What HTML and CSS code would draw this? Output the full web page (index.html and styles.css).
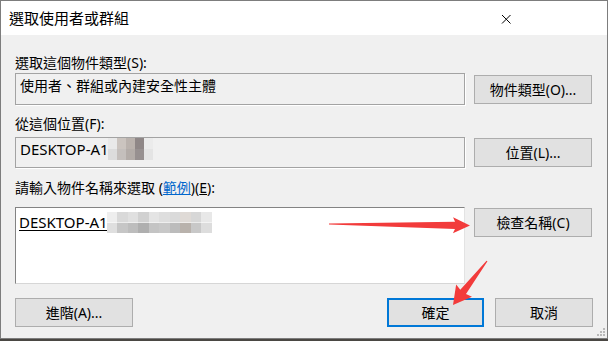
FILE: index.html
```html
<!DOCTYPE html>
<html lang="zh-Hant">
<head>
<meta charset="utf-8">
<title>選取使用者或群組</title>
<link rel="stylesheet" href="styles.css">
</head>
<body>
<div class="window">
  <div class="titlebar">
    <span class="title">選取使用者或群組</span>
    <svg class="close" width="10" height="10" viewBox="0 0 10 10"><path d="M1 1L9.5 9.5M9.5 1L1 9.5" stroke="#000" stroke-width="1" fill="none"/></svg>
  </div>
  <div class="content">
    <div class="label l1">選取這個物件類型(S):</div>
    <div class="row r1">
      <div class="field ro">使用者、群組或內建安全性主體</div>
      <button class="btn">物件類型(O)...</button>
    </div>
    <div class="label l2">從這個位置(F):</div>
    <div class="row r2">
      <div class="field ro short"><span class="host">DESKTOP-A1</span><span class="mosaic small"></span></div>
      <button class="btn">位置(L)...</button>
    </div>
    <div class="label l3">請輸入物件名稱來選取 (<a class="link">範例</a>)(<u>E</u>):</div>
    <div class="row r3">
      <div class="field edit"><span class="host name">DESKTOP-A1</span><span class="mosaic big"></span></div>
      <button class="btn">檢查名稱(C)</button>
    </div>
    <div class="footer">
      <button class="btn adv">進階(A)...</button>
      <div class="actions">
        <button class="btn ok">確定</button>
        <button class="btn cancel">取消</button>
      </div>
    </div>
  </div>
  <svg class="grip" width="10" height="10" viewBox="0 0 10 10">
    <rect x="7" y="1" width="2" height="2" fill="#b9b9b9"/>
    <rect x="4" y="4" width="2" height="2" fill="#b9b9b9"/>
    <rect x="7" y="4" width="2" height="2" fill="#b9b9b9"/>
    <rect x="1" y="7" width="2" height="2" fill="#b9b9b9"/>
    <rect x="4" y="7" width="2" height="2" fill="#b9b9b9"/>
    <rect x="7" y="7" width="2" height="2" fill="#b9b9b9"/>
  </svg>
</div>
<svg class="arrows" width="608" height="341" viewBox="0 0 608 341">
  <g transform="translate(329 224) rotate(0.6)">
    <polygon points="0,-0.6 126,-3.6 124,-8 141,0 124,8 126,3.6 0,0.6" fill="#f23b3b"/>
  </g>
  <g transform="translate(487 261) rotate(127.7)">
    <polygon points="0,-0.6 39,-3.6 37.5,-10 55.6,0 37.5,10 39,3.6 0,0.6" fill="#f23b3b"/>
  </g>
</svg>
</body>
</html>
```

FILE: styles.css
```css
* { box-sizing: border-box; }
html, body { margin: 0; padding: 0; }
body {
  width: 608px;
  height: 341px;
  overflow: hidden;
  position: relative;
  background: #4a4743;
  font-family: "Noto Sans", "Noto Sans CJK TC", sans-serif;
  color: #000;
}
.window {
  position: relative;
  width: 608px;
  height: 339px;
  border: 1px solid #7d7d7d;
  background: #f0f0f0;
  display: flex;
  flex-direction: column;
}
.titlebar {
  height: 34px;
  background: #fff;
  display: flex;
  align-items: center;
  justify-content: space-between;
  padding: 0 96px 0 8px;
}
.title {
  font-size: 15px;
  line-height: 20px;
}
.close { display: block; margin-top: 1px; }
.content {
  padding: 19px 14px 0 14px;
  display: flex;
  flex-direction: column;
}
.label {
  font-size: 14px;
  line-height: 18px;
  height: 18px;
  white-space: nowrap;
}
.l2 { margin-top: 10px; }
.l3 { margin-top: 11px; }
.link { color: #0066cc; text-decoration: underline; }
.row {
  display: grid;
  grid-template-columns: 450px 118px;
  column-gap: 9px;
  align-items: start;
}
.r1 { margin-top: 1px; }
.r2 { margin-top: 4px; }
.r3 { margin-top: 10px; }
.field {
  position: relative;
  font-size: 14px;
  line-height: 18px;
  white-space: nowrap;
}
.host { font-size: 15px; }
.ro {
  height: 32px;
  padding: 3px 4px 0 4px;
  border: 1px solid #a3a3a3;
  box-shadow: 1px 1px 0 #fff;
  background: #f0f0f0;
}
.short { height: 31px; padding-top: 2px; }
.edit {
  height: 77px;
  padding: 5px 3px 0 3px;
  background: #fff;
  border-top: 1px solid #838383;
  border-left: 1px solid #838383;
  border-right: 1px solid #e3e3e3;
  border-bottom: 1px solid #d6d6d6;
}
.name { text-decoration: underline; text-underline-offset: 2px; }
.mosaic { position: absolute; display: block; filter: blur(0.5px); }
.mosaic.small {
  left: 92px;
  top: 0;
  width: 45px;
  height: 22px;
  background:
    linear-gradient(90deg, #e9e9e9 0 9px, #cbc4bf 9px 18px, #bab2ad 18px 27px, #8f8787 27px 36px, #ebebeb 36px 45px) top / 100% 50% no-repeat,
    linear-gradient(90deg, #dcdcdc 0 9px, #c4bfbc 9px 18px, #b3aca8 18px 27px, #979090 27px 36px, #e4e4e4 36px 45px) bottom / 100% 50% no-repeat;
}
.mosaic.big {
  left: 91px;
  top: 4px;
  width: 105px;
  height: 21px;
  background:
    linear-gradient(90deg, #eeeeee 0 10px, #d9d9d9 10px 21px, #e0e0e0 21px 31px, #d1d1d1 31px 42px, #e4e4e4 42px 52px, #dedede 52px 63px, #dadada 63px 73px, #dfdad6 73px 84px, #d7d7d7 84px 94px, #e8e8e8 94px 105px) top / 100% 50% no-repeat,
    linear-gradient(90deg, #dfdfdf 0 10px, #c6c6c6 10px 21px, #bdbdbd 21px 31px, #afafaf 31px 42px, #c4c4c4 42px 52px, #c8c8c8 52px 63px, #bcbcbc 63px 73px, #b9b2ac 73px 84px, #c8c8c8 84px 94px, #dddddd 94px 105px) bottom / 100% 50% no-repeat;
}
.btn {
  font-family: inherit;
  font-size: 14px;
  line-height: 18px;
  color: #000;
  height: 29px;
  margin: 0;
  padding: 0;
  background: #e1e1e1;
  border: 1px solid #adadad;
  border-radius: 0;
  white-space: nowrap;
}
.r1 .btn { margin-top: 2px; }
.r2 .btn { margin-top: 1px; }
.r3 .btn { margin-top: 1px; }
.footer {
  margin-top: 14px;
  display: flex;
  justify-content: space-between;
}
.adv { width: 118px; }
.actions { display: flex; gap: 11px; }
.ok { width: 97px; border: 2px solid #0078d7; }
.cancel { width: 98px; }
.grip {
  position: absolute;
  right: 1px;
  bottom: 1px;
}
.arrows {
  position: absolute;
  left: 0;
  top: 0;
  pointer-events: none;
}
```
